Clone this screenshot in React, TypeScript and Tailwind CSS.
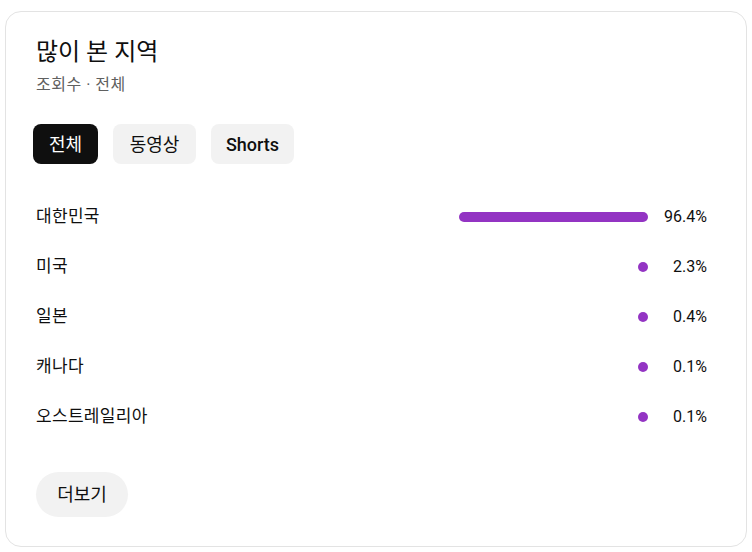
const rows = [
  { name: '대한민국', pct: 96.4 },
  { name: '미국', pct: 2.3 },
  { name: '일본', pct: 0.4 },
  { name: '캐나다', pct: 0.1 },
  { name: '오스트레일리아', pct: 0.1 },
]

const tabs = ['전체', '동영상', 'Shorts']

export default function App() {
  return (
    <div
      className="bg-white min-h-[552px] pt-[11px] pl-[5px] text-[#0f0f0f]"
      style={{ fontFamily: 'Roboto, "Noto Sans CJK KR", sans-serif' }}
    >
      <div className="w-[742px] h-[536px] border border-[#e3e3e3] rounded-2xl pt-[24px] pl-[30px] pr-[39px]">
        <h2 className="text-[24px] leading-[32px] font-normal">많이 본 지역</h2>
        <div className="mt-[5px] text-[16px] leading-[24px] tracking-[0.5px] text-[#606060]">조회수 · 전체</div>

        <div className="mt-[27px] -ml-[3px] flex gap-[15px]">
          {tabs.map((t, i) => (
            <button
              key={t}
              className={
                i === 0
                  ? 'h-10 w-[65px] rounded-lg bg-[#0f0f0f] text-white text-[18px]'
                  : t === 'Shorts'
                    ? 'h-10 w-[83px] rounded-lg bg-[#f2f2f2] text-[18px] font-medium'
                    : 'h-10 w-[83px] rounded-lg bg-[#f2f2f2] text-[18px]'
              }
            >
              {t}
            </button>
          ))}
        </div>

        <div className="mt-[28px]">
          {rows.map((r) => (
            <div key={r.name} className="h-[50px] flex items-center">
              <div className="flex-1 text-[17px] tracking-[0.3px]">{r.name}</div>
              <div className="w-[196px] flex justify-end">
                <div
                  className="h-[10px] rounded-full bg-[#9334c3]"
                  style={{ width: Math.max((r.pct / 100) * 196, 10) }}
                />
              </div>
              <div className="w-[59px] text-right text-[16px]">{r.pct}%</div>
            </div>
          ))}
        </div>

        <button className="mt-[30px] h-[45px] w-[92px] rounded-full bg-[#f2f2f2] text-[18px]">
          더보기
        </button>
      </div>
    </div>
  )
}
